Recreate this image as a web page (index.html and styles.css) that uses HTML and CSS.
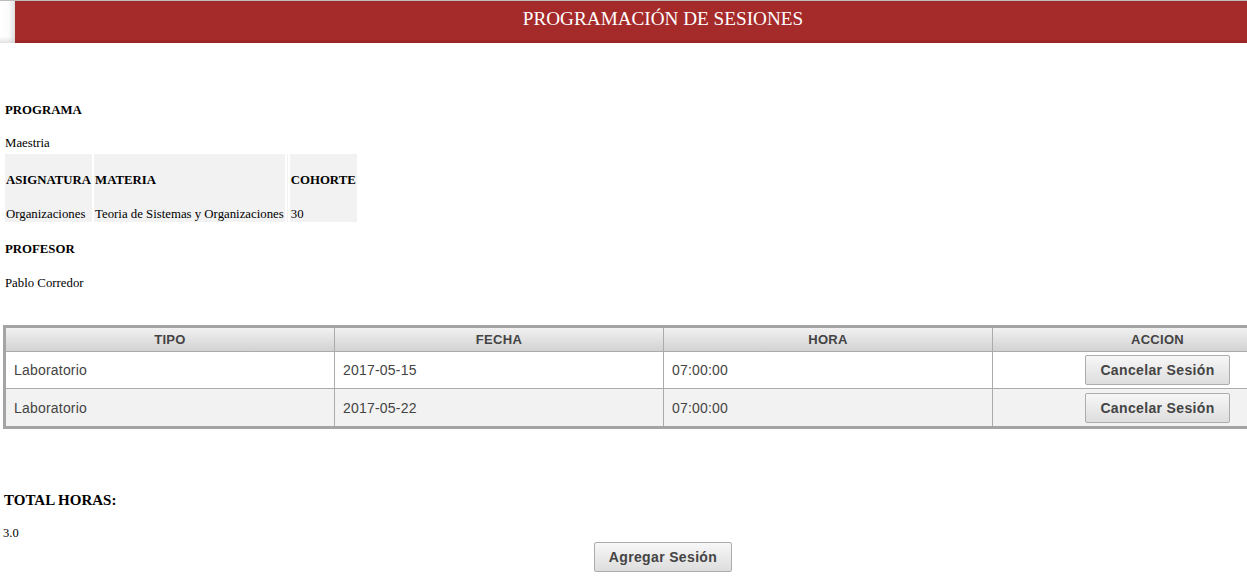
FILE: index.html
```html
<!DOCTYPE html>
<html lang="es">
<head>
<meta charset="utf-8">
<title>Programación de Sesiones</title>
<link rel="stylesheet" href="styles.css">
</head>
<body>
<div class="page">
  <header class="topbar">
    <div class="topbar-side"></div>
    <div class="topbar-bar">PROGRAMACIÓN DE SESIONES</div>
  </header>

  <section class="info">
    <h5 class="label label-first">PROGRAMA</h5>
    <p class="value">Maestria</p>

    <table class="course">
      <tr>
        <th class="c-asig">ASIGNATURA</th>
        <th class="c-mat">MATERIA</th>
        <th class="c-empty"></th>
        <th class="c-coh">COHORTE</th>
      </tr>
      <tr>
        <td>Organizaciones</td>
        <td>Teoria de Sistemas y Organizaciones</td>
        <td class="c-empty"></td>
        <td>30</td>
      </tr>
    </table>

    <h5 class="label label-prof">PROFESOR</h5>
    <p class="value value-prof">Pablo Corredor</p>
  </section>

  <table class="sessions">
    <thead>
      <tr>
        <th>TIPO</th>
        <th>FECHA</th>
        <th>HORA</th>
        <th class="last">ACCION</th>
      </tr>
    </thead>
    <tbody>
      <tr class="row-a">
        <td>Laboratorio</td>
        <td>2017-05-15</td>
        <td>07:00:00</td>
        <td class="last action"><button class="btn" type="button">Cancelar Sesión</button></td>
      </tr>
      <tr class="row-b">
        <td>Laboratorio</td>
        <td>2017-05-22</td>
        <td>07:00:00</td>
        <td class="last action"><button class="btn" type="button">Cancelar Sesión</button></td>
      </tr>
    </tbody>
  </table>

  <section class="totals">
    <h4 class="total-label">TOTAL HORAS:</h4>
    <p class="total-value">3.0</p>
    <div class="add-wrap">
      <button class="btn btn-add" type="button">Agregar Sesión</button>
    </div>
  </section>
</div>
</body>
</html>
```

FILE: styles.css
```css
html, body {
  margin: 0;
  padding: 0;
  background: #ffffff;
}

body {
  overflow-x: hidden;
  font-family: "Liberation Serif", "Times New Roman", serif;
  color: #000;
}

.page {
  width: 1326px;
}

/* ---------- top bar ---------- */
.topbar {
  display: flex;
  border-top: 1px solid #bdbdbd;
  height: 42px;
}

.topbar-side {
  width: 15px;
  flex: none;
  background:
    linear-gradient(to bottom, rgba(255,255,255,0) 85%, rgba(200,200,200,0.5) 100%),
    linear-gradient(to right, #ffffff 0%, #fbfbfb 60%, #dedede 100%);
}

.topbar-bar {
  flex: 1;
  background: linear-gradient(to bottom, #a52a2a 0%, #a52a2a 90%, #982424 100%);
  color: #ffffff;
  font-family: "Liberation Serif", "Times New Roman", serif;
  font-size: 19.2px;
  line-height: 36px;
  padding-bottom: 6px;
  padding-right: 15px;
  text-align: center;
}

/* ---------- info block ---------- */
.info {
  padding-left: 5px;
}

.label {
  margin: 0;
  font-size: 12.8px;
  font-weight: bold;
  line-height: 16px;
}

.label-first {
  margin-top: 59px;
}

.value {
  margin: 17px 0 0;
  font-size: 12.8px;
  line-height: 16px;
}

.course {
  border-spacing: 2px 0;
  margin: 3px 0 0 -2px;
}

.course th,
.course td {
  background: #f2f2f2;
  text-align: left;
  vertical-align: top;
  white-space: nowrap;
  line-height: 16px;
}

.course th {
  font-size: 12.8px;
  font-weight: bold;
  padding: 18px 1px 8px;
}

.course td {
  font-size: 12.8px;
  padding: 10px 1px 0;
}

.course .c-empty {
  padding-left: 0;
  padding-right: 0;
  width: 1px;
}

.label-prof {
  margin-top: 19px;
}

.value-prof {
  margin-top: 18px;
}

/* ---------- sessions table ---------- */
.sessions {
  margin: 34px 0 0 3px;
  width: 1322px;
  table-layout: fixed;
  border: 3px solid #a4a4a4;
  border-spacing: 0;
  font-family: "Liberation Sans", Arial, sans-serif;
  color: #444;
}

.sessions th {
  height: 23px;
  padding: 0;
  font-size: 13px;
  letter-spacing: 0.3px;
  font-weight: bold;
  text-align: center;
  color: #444;
  background: linear-gradient(to bottom, #f1f1f1 0%, #d2d2d2 100%);
  border-right: 1px solid #ababab;
  border-bottom: 1px solid #ababab;
}

.sessions td {
  padding: 0 8px;
  font-size: 14px;
  letter-spacing: 0.2px;
  text-align: left;
  border-right: 1px solid #ababab;
  vertical-align: middle;
}

.sessions .last {
  border-right: none;
}

.row-a td {
  height: 36px;
  background: #ffffff;
  border-bottom: 1px solid #ababab;
}

.row-b td {
  height: 37px;
  background: #f2f2f2;
}

.sessions td.action {
  text-align: center;
  padding: 0;
  letter-spacing: 0;
}

/* ---------- buttons ---------- */
.btn {
  display: inline-block;
  height: 30px;
  padding: 0 14px;
  font-family: "Liberation Sans", Arial, sans-serif;
  font-size: 14px;
  letter-spacing: 0.35px;
  font-weight: bold;
  color: #444;
  background: linear-gradient(to bottom, #f7f7f7 0%, #dddddd 100%);
  border: 1px solid #acacac;
  border-radius: 2px;
  vertical-align: middle;
  cursor: pointer;
}

/* ---------- totals ---------- */
.totals {
  padding-left: 4px;
}

.total-label {
  margin: 62px 0 0;
  font-size: 15px;
  font-weight: bold;
  line-height: 18px;
}

.total-value {
  margin: 16px 0 0 -1px;
  font-size: 12.5px;
  line-height: 16px;
}

.add-wrap {
  text-align: center;
  margin-top: 1px;
  margin-left: -4px;
}

.btn-add {
  padding: 0 14px;
}
```
